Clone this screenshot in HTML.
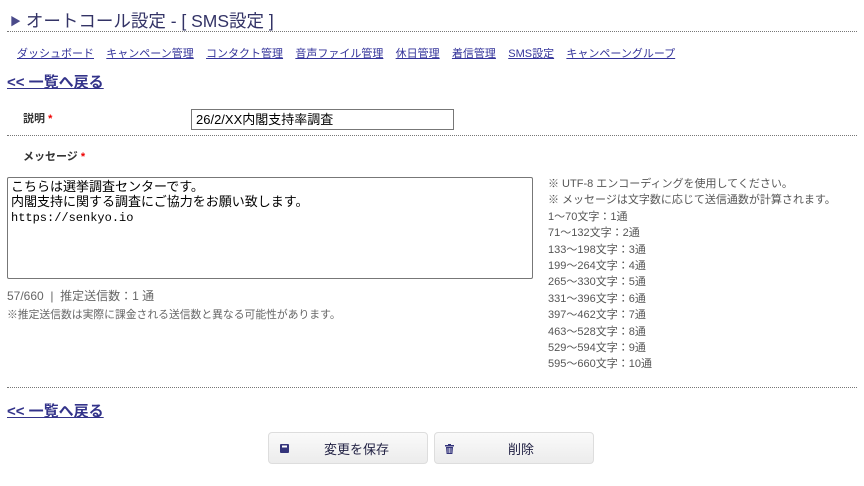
<!DOCTYPE html>
<html><head><meta charset="utf-8"><style>
body{margin:0;width:864px;height:486px;background:#fff;font-family:"Liberation Sans","Noto Sans CJK JP",sans-serif;color:#333;position:relative;overflow:hidden}
.a{position:absolute;white-space:nowrap}
.dot{position:absolute;left:7px;width:850px;border-top:1px dotted #777;height:0}
.nav a{color:#33339a;text-decoration:underline;font-size:11px;margin-right:12.3px}
.back{color:#33338a;font-weight:bold;font-size:15px;text-decoration:underline}
.r{font-size:11px;color:#555;line-height:16.4px}
.btn{position:absolute;top:432px;height:30px;border:1px solid #ddd;border-radius:4px;background:linear-gradient(#fafafa,#ececec);font-size:13px;color:#224}
</style></head><body>
<div class="a" style="left:10px;top:8px;font-size:17.5px;color:#333366"><span style="color:#4a4a8a;font-size:11px;vertical-align:2px">▶</span> オートコール設定 - [ SMS設定 ]</div>
<div class="dot" style="top:31px"></div>
<div class="a nav" style="left:17px;top:44px"><a>ダッシュボード</a><a>キャンペーン管理</a><a>コンタクト管理</a><a>音声ファイル管理</a><a>休日管理</a><a>着信管理</a><a>SMS設定</a><a>キャンペーングループ</a></div>
<div class="a back" style="left:7px;top:71px">&lt;&lt; 一覧へ戻る</div>
<div class="a" style="left:23px;top:110px;font-size:11px;font-weight:bold">説明 <span style="color:#e00">*</span></div>
<div class="a" style="left:191px;top:109px;height:19px;border:1px solid #777;font-size:13px;line-height:19px;padding-left:4px;color:#000;width:257px">26/2/XX内閣支持率調査</div>
<div class="dot" style="top:135px"></div>
<div class="a" style="left:23px;top:148px;font-size:11px;font-weight:bold">メッセージ <span style="color:#e00">*</span></div>
<div class="a" style="left:7px;top:177px;width:526px;height:102px;border:1px solid #777;border-radius:2px;font-size:13px;line-height:15px;color:#000;padding:1px 3px;box-sizing:border-box">こちらは選挙調査センターです。<br>内閣支持に関する調査にご協力をお願い致します。<br><span style="font-family:'Liberation Mono',monospace;font-size:12px">https://senkyo.io</span></div>
<div class="a" style="left:7px;top:287px;font-size:12px;color:#666">57/660 &nbsp;| &nbsp;推定送信数：1 通</div>
<div class="a" style="left:7px;top:306px;font-size:10.8px;color:#666">※推定送信数は実際に課金される送信数と異なる可能性があります。</div>
<div class="a r" style="left:548px;top:176px">※ UTF-8 エンコーディングを使用してください。<br>※ メッセージは文字数に応じて送信通数が計算されます。<br>1〜70文字：1通<br>71〜132文字：2通<br>133〜198文字：3通<br>199〜264文字：4通<br>265〜330文字：5通<br>331〜396文字：6通<br>397〜462文字：7通<br>463〜528文字：8通<br>529〜594文字：9通<br>595〜660文字：10通</div>
<div class="dot" style="top:387px"></div>
<div class="a back" style="left:7px;top:400px">&lt;&lt; 一覧へ戻る</div>
<div class="btn" style="left:268px;width:158px"><svg style="position:absolute;left:11px;top:11px" width="9" height="9" viewBox="0 0 9 9"><rect x="0" y="0" width="9" height="9" rx="1" fill="#33337a"/><rect x="2" y="1.5" width="5" height="2" fill="#fff"/></svg><span style="position:absolute;left:55px;top:6px">変更を保存</span></div>
<div class="btn" style="left:434px;width:158px"><svg style="position:absolute;left:10px;top:11px" width="9" height="10" viewBox="0 0 9 10"><rect x="0" y="1" width="9" height="1.5" fill="#33337a"/><rect x="3" y="0" width="3" height="1.5" fill="#33337a"/><path d="M1 3h7l-.6 7H1.6z" fill="#33337a"/><path d="M3 4v5M4.5 4v5M6 4v5" stroke="#fff" stroke-width=".6"/></svg><span style="position:absolute;left:73px;top:6px">削除</span></div>
</body></html>
